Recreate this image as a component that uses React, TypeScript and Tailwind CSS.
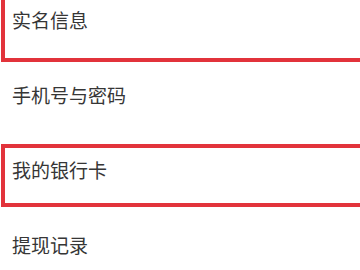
import React from "react";

const items = ["实名信息", "手机号与密码", "我的银行卡", "提现记录"];

export default function App() {
  return (
    <div
      className="relative w-[360px] h-[270px] overflow-hidden bg-white"
      style={{ fontFamily: '"Noto Sans CJK SC", "Noto Sans", sans-serif' }}
    >
      <div className="-mt-[17px] flex flex-col">
        {items.map((t) => (
          <div key={t} className="h-[75px] flex items-center pl-3 text-[19px] text-[#363636]">
            {t}
          </div>
        ))}
      </div>
      <div className="absolute left-[1px] top-[-6px] w-[380px] h-[68px] border-4 border-[#e2333b]" />
      <div className="absolute left-[1px] top-[144px] w-[380px] h-[63px] border-4 border-[#e2333b]" />
    </div>
  );
}
